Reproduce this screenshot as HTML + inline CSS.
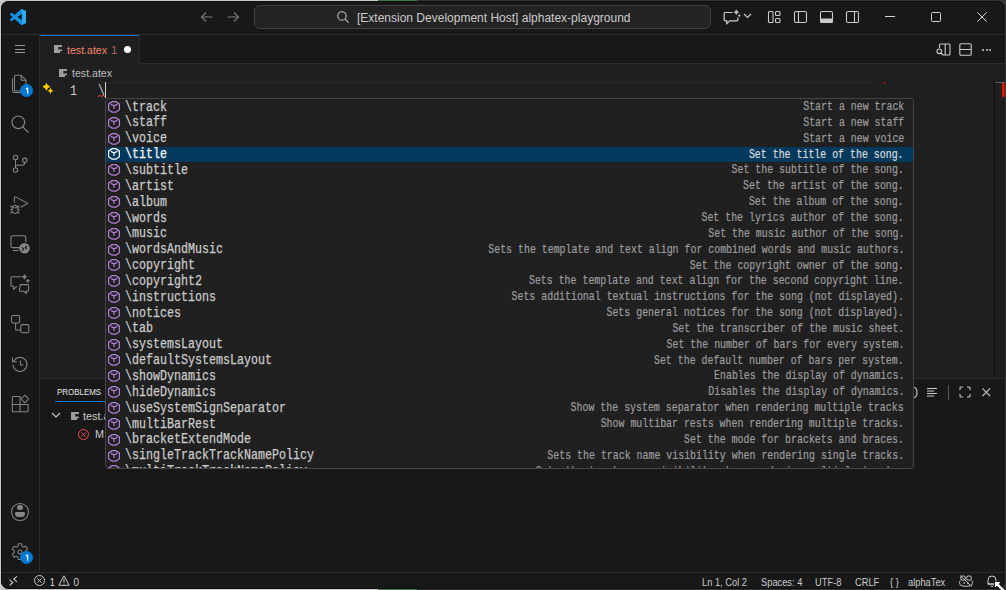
<!DOCTYPE html>
<html><head><meta charset="utf-8">
<style>
html,body{margin:0;padding:0;width:1006px;height:590px;overflow:hidden;background:#363636;font-family:"Liberation Sans",sans-serif;}
.a{position:absolute;}
#win{position:absolute;left:1px;top:1px;width:1004px;height:588px;background:#181818;border-radius:8px;overflow:hidden;}
#pg{position:absolute;left:-1px;top:-1px;width:1006px;height:590px;}
#winborder{position:absolute;left:1px;top:1px;width:1002px;height:586px;border:1px solid rgba(0,0,0,.4);border-right-color:rgba(0,0,0,.15);border-radius:8px;pointer-events:none;}
svg{position:absolute;overflow:visible;}
.row{position:absolute;left:0;width:807px;height:15.85px;}
.row .ic{position:absolute;left:2.2px;top:1.9px;width:12px;height:11.8px;}
.row .lb{position:absolute;left:19px;top:0.6px;font-size:14px;line-height:15.83px;color:#cccccc;font-family:"Liberation Mono",monospace;white-space:pre;transform:scaleX(.8333);transform-origin:0 0;-webkit-text-stroke-width:0.25px;}
.row .ds{position:absolute;right:9px;top:1px;font-size:11.9px;line-height:15.83px;color:#9d9d9d;font-family:"Liberation Mono",monospace;white-space:pre;transform:scaleX(.8333);transform-origin:100% 0;-webkit-text-stroke-width:0.2px;}
.row.sel{background:#04395e;}
.row.sel .lb{color:#ffffff;}
.row.sel .ds{color:#dcdcdc;}
</style></head><body>
<div class="a" style="left:0;top:0;width:378px;height:590px;background:#c9cacc"></div>
<div class="a" style="left:378px;top:0;width:39px;height:590px;background:#3d7a4e"></div>
<div id="win"><div id="pg">
<!-- TITLE BAR -->
<div class="a" style="left:0;top:0;width:1006px;height:34px;background:#181818"></div>
<div class="a" style="left:0;top:34px;width:1006px;height:1px;background:#2b2b2b"></div>
<!-- vscode logo -->
<svg style="left:10px;top:9px" width="16" height="16" viewBox="0 0 100 100"><defs><clipPath id="rb"><rect x="74" y="0" width="30" height="100"/></clipPath></defs>
 <path d="M96.5 10.8 75.9.9a6.2 6.2 0 0 0-7.1 1.2L29.4 38 12.2 25a4.2 4.2 0 0 0-5.3.2L1.4 30.2a4.2 4.2 0 0 0 0 6.2L16.3 50 1.4 63.6a4.2 4.2 0 0 0 0 6.2l5.5 5a4.2 4.2 0 0 0 5.3.2l17.2-13 39.4 35.9a6.2 6.2 0 0 0 7.1 1.2l20.6-9.9a6.2 6.2 0 0 0 3.5-5.6V16.4a6.2 6.2 0 0 0-3.5-5.6zM74 70.5 47 50 74 29.5z" fill="#1690e0"/><path d="M96.5 10.8 75.9.9a6.2 6.2 0 0 0-7.1 1.2L29.4 38 12.2 25a4.2 4.2 0 0 0-5.3.2L1.4 30.2a4.2 4.2 0 0 0 0 6.2L16.3 50 1.4 63.6a4.2 4.2 0 0 0 0 6.2l5.5 5a4.2 4.2 0 0 0 5.3.2l17.2-13 39.4 35.9a6.2 6.2 0 0 0 7.1 1.2l20.6-9.9a6.2 6.2 0 0 0 3.5-5.6V16.4a6.2 6.2 0 0 0-3.5-5.6zM74 70.5 47 50 74 29.5z" fill="#2aa9f4" clip-path="url(#rb)"/>
</svg>
<!-- back / forward arrows -->
<svg style="left:199px;top:9px" width="16" height="16" viewBox="0 0 16 16" fill="none" stroke="#7a7a7a" stroke-width="1.1"><path d="M2.5 8h11M7 3.5 2.5 8 7 12.5"/></svg>
<svg style="left:225px;top:9px" width="16" height="16" viewBox="0 0 16 16" fill="none" stroke="#7a7a7a" stroke-width="1.1"><path d="M2.5 8h11M9 3.5 13.5 8 9 12.5"/></svg>
<!-- command center -->
<div class="a" style="left:254px;top:5px;width:455px;height:22px;border:1px solid #404040;border-radius:6px;background:#232323"></div>
<svg style="left:336px;top:10px" width="14" height="14" viewBox="0 0 16 16" fill="none" stroke="#c4c4c4" stroke-width="1.2"><circle cx="6.8" cy="6.8" r="4.8"/><path d="M10.3 10.3 14.5 14.5"/></svg>
<div class="a" style="left:357px;top:9.7px;font-size:12px;line-height:16px;color:#cccccc;white-space:pre">[Extension Development Host] alphatex-playground</div>

<!-- chat icon + chevron -->
<svg style="left:723px;top:9px" width="18" height="16" viewBox="0 0 18 16" fill="none" stroke="#cccccc" stroke-width="1.2"><path d="M9.5 3.5H2.2a1 1 0 0 0-1 1v6.3a1 1 0 0 0 1 1h1.6v2.8l2.9-2.8h7.2a1 1 0 0 0 1-1V8.5"/><path d="M13.3 0.8l.7 1.7 1.7.7-1.7.7-.7 1.7-.7-1.7-1.7-.7 1.7-.7z" fill="#cccccc" stroke-width="0.6"/><path d="M16.3 5.3l.4.9.9.4-.9.4-.4.9-.4-.9-.9-.4.9-.4z" fill="#cccccc" stroke-width="0.4"/></svg>
<svg style="left:743px;top:13px" width="9" height="6" viewBox="0 0 9 6" fill="none" stroke="#cccccc" stroke-width="1.1"><path d="M1 1 4.5 4.5 8 1"/></svg>
<!-- layout icons -->
<svg style="left:767px;top:10px" width="15" height="14" viewBox="0 0 15 14" fill="none" stroke="#cccccc" stroke-width="1.1"><rect x="1.5" y="1.5" width="4.5" height="11" rx="1"/><rect x="8.5" y="1.5" width="4.5" height="4" rx="1"/><rect x="8.5" y="8.5" width="4.5" height="4" rx="1"/></svg>
<svg style="left:793px;top:10px" width="15" height="14" viewBox="0 0 15 14" fill="none" stroke="#cccccc" stroke-width="1.1"><rect x="1.5" y="1.5" width="12" height="11" rx="1.5"/><path d="M5.5 1.5v11"/></svg>
<svg style="left:819px;top:10px" width="15" height="14" viewBox="0 0 15 14" fill="none" stroke="#cccccc" stroke-width="1.1"><rect x="1.5" y="1.5" width="12" height="11" rx="1.5"/><path d="M1.5 9h12v2a1.5 1.5 0 0 1-1.5 1.5H3A1.5 1.5 0 0 1 1.5 11z" fill="#cccccc"/></svg>
<svg style="left:845px;top:10px" width="15" height="14" viewBox="0 0 15 14" fill="none" stroke="#cccccc" stroke-width="1.1"><rect x="1.5" y="1.5" width="12" height="11" rx="1.5"/><path d="M9.5 1.5v11"/></svg>
<!-- window controls -->
<div class="a" style="left:885px;top:16px;width:10px;height:1px;background:#d0d0d0"></div>
<div class="a" style="left:931px;top:12px;width:8px;height:8px;border:1px solid #d0d0d0;border-radius:1.5px"></div>
<svg style="left:977px;top:12px" width="10" height="10" viewBox="0 0 10 10" fill="none" stroke="#d8d8d8" stroke-width="1"><path d="M0.3 0.3 9.7 9.7M9.7 0.3 0.3 9.7"/></svg>

<!-- ACTIVITY BAR -->
<div class="a" style="left:0;top:35px;width:39px;height:537px;background:#181818"></div>
<div class="a" style="left:39px;top:35px;width:1px;height:537px;background:#2b2b2b"></div>
<!-- hamburger -->
<div class="a" style="left:15px;top:45px;width:10px;height:1px;background:#9a9a9a"></div>
<div class="a" style="left:15px;top:48.6px;width:10px;height:1px;background:#9a9a9a"></div>
<div class="a" style="left:15px;top:52.2px;width:10px;height:1px;background:#9a9a9a"></div>
<!-- files -->
<svg style="left:10px;top:74px" width="20" height="20" viewBox="0 0 20 20" fill="none" stroke="#868686" stroke-width="1.05"><path d="M5.5 1.3h5.6l4.9 4.9V16a1 1 0 0 1-1 1H5.5a1 1 0 0 1-1-1V2.3a1 1 0 0 1 1-1z"/><path d="M11.1 1.3v3.9a1 1 0 0 0 1 1H16"/><path d="M2.5 4.3v12.4a1.8 1.8 0 0 0 1.8 1.8H11"/></svg>
<div class="a" style="left:20px;top:83.5px;width:13px;height:13px;border-radius:50%;background:#0078d4"></div>
<svg style="left:20px;top:83.5px" width="13" height="13" viewBox="0 0 13 13"><path d="M5.6 4.6 7.3 3.4h.9v6.3H7V4.9L5.9 5.6z" fill="#fff"/></svg>
<!-- search -->
<svg style="left:10px;top:114px" width="20" height="20" viewBox="0 0 20 20" fill="none" stroke="#868686" stroke-width="1.1"><circle cx="8.3" cy="8.3" r="6.3"/><path d="M12.8 12.8 18.5 18.5"/></svg>
<!-- scm -->
<svg style="left:10px;top:154px" width="20" height="20" viewBox="0 0 20 20" fill="none" stroke="#868686" stroke-width="1.05"><circle cx="5.5" cy="3.5" r="2.2"/><circle cx="5.5" cy="16" r="2.2"/><circle cx="14.8" cy="6.3" r="2.2"/><path d="M5.5 5.7v8.1M14.8 8.5c0 2-1.3 2.8-3 2.8H5.5"/></svg>
<!-- run debug -->
<svg style="left:10px;top:194px" width="20" height="20" viewBox="0 0 20 20" fill="none" stroke="#868686" stroke-width="1.05" stroke-linejoin="round"><path d="M4.3 8.8V3.6a.8.8 0 0 1 1.2-.7l12.3 6.5-7 3.9"/><path d="M5 11.3c1.8 0 3 1.9 3 4.1s-1.2 4.1-3 4.1-3-1.9-3-4.1 1.2-4.1 3-4.1zM2.2 13.8h5.6M.4 12l1.8 1.2M.2 15.8h1.9M.4 19.4l1.8-1.2M9.6 12l-1.8 1.2M9.8 15.8H7.9M9.6 19.4l-1.8-1.2"/></svg>
<!-- remote explorer -->
<svg style="left:10px;top:234px" width="20" height="20" viewBox="0 0 20 20" fill="none" stroke="#868686" stroke-width="1.05"><path d="M10 13.6H2.3A1.3 1.3 0 0 1 1 12.3V3a1.3 1.3 0 0 1 1.3-1.3h12.2A1.3 1.3 0 0 1 15.8 3v5"/><path d="M3 16.5h5.5"/><circle cx="14.5" cy="14.3" r="5.3" fill="#868686" stroke="none"/><path d="M11.9 13.4l1.9 1.7-1.9 1.7M17.1 11.8l-1.9 1.7 1.9 1.7" stroke="#181818" stroke-width="1.1"/></svg>
<!-- chat -->
<svg style="left:10px;top:274px" width="20" height="20" viewBox="0 0 20 20" fill="none" stroke="#868686" stroke-width="1.05"><path d="M11.5 2.7H2.3A1.3 1.3 0 0 0 1 4v7.3a1 1 0 0 0 1 1h1.7v3l3.3-3"/><path d="M10.3 10.6h7.2a1 1 0 0 1 1 1v4.7a1 1 0 0 1-1 1h-1.3v2.2l-2.4-2.2h-3.5a1 1 0 0 1-1-1z"/><path d="M14.5 0.19999999999999973Q15.07 2.23 17.1 2.8Q15.07 3.37 14.5 5.4Q13.93 3.37 11.9 2.8Q13.93 2.23 14.5 0.19999999999999973zM17.8 4.9Q18.22 6.38 19.7 6.8Q18.22 7.22 17.8 8.7Q17.38 7.22 15.9 6.8Q17.38 6.38 17.8 4.9z" fill="#868686" stroke="#868686" stroke-width="0.4"/></svg>
<!-- squares (testing/other) -->
<svg style="left:10px;top:314px" width="20" height="20" viewBox="0 0 20 20" fill="none" stroke="#868686" stroke-width="1.05"><rect x="1.6" y="1.4" width="8" height="7.6" rx="1.5"/><rect x="10.8" y="10.6" width="8" height="8.2" rx="1.5"/><path d="M5.6 9v6.2a.8.8 0 0 0 .8.8h4.4"/></svg>
<!-- timeline -->
<svg style="left:10px;top:354px" width="20" height="20" viewBox="0 0 20 20" fill="none" stroke="#868686" stroke-width="1.05"><path d="M3.6 7.5A7 7 0 1 1 3 11"/><path d="M2.5 3.5v4.3h4.3"/><path d="M10.5 6.5V11h3"/></svg>
<!-- extensions -->
<svg style="left:10px;top:394px" width="20" height="20" viewBox="0 0 20 20" fill="none" stroke="#868686" stroke-width="1.05"><path d="M2.3 17V3.5a1 1 0 0 1 1-1H10v15.3M2.3 10.5h15.8v6.3a1 1 0 0 1-1 1H3.3a1 1 0 0 1-1-1"/><path d="M14.8 1.2l3.8 3.8-3.8 3.8-3.8-3.8z" stroke-linejoin="round"/></svg>
<!-- accounts -->
<svg style="left:10px;top:502px" width="20" height="20" viewBox="0 0 20 20" fill="none" stroke="#868686" stroke-width="1.05"><circle cx="10" cy="10" r="8.5"/></svg>
<div class="a" style="left:17.4px;top:504.8px;width:5.2px;height:5.2px;border-radius:50%;background:#868686"></div>
<div class="a" style="left:15.4px;top:512px;width:9.4px;height:5px;border-radius:1.5px 1.5px 5px 5px;background:#868686"></div>
<!-- manage gear -->
<svg style="left:10px;top:542px" width="20" height="20" viewBox="0 0 20 20" fill="none" stroke="#868686" stroke-width="1.05"><path d="M8.4 1.8h3.2l.5 2.4 1.6.9 2.3-.8 1.6 2.8-1.8 1.6v1.9l1.8 1.6-1.6 2.8-2.3-.8-1.6.9-.5 2.4H8.4l-.5-2.4-1.6-.9-2.3.8-1.6-2.8 1.8-1.6V8.7L2.4 7.1 4 4.3l2.3.8 1.6-.9z"/><circle cx="10" cy="10" r="2"/></svg>
<div class="a" style="left:20px;top:551px;width:13px;height:13px;border-radius:50%;background:#0078d4"></div>
<svg style="left:20px;top:551px" width="13" height="13" viewBox="0 0 13 13"><path d="M5.6 4.6 7.3 3.4h.9v6.3H7V4.9L5.9 5.6z" fill="#fff"/></svg>

<!-- TAB BAR -->
<div class="a" style="left:40px;top:35px;width:966px;height:29px;background:#181818"></div>
<div class="a" style="left:40px;top:63px;width:966px;height:1px;background:#2b2b2b"></div>
<div class="a" style="left:40px;top:35px;width:99px;height:29px;background:#1f1f1f"></div>
<div class="a" style="left:40px;top:35px;width:99px;height:1px;background:#0078d4"></div>
<div class="a" style="left:139px;top:35px;width:1px;height:28px;background:#2b2b2b"></div>
<svg style="left:54px;top:45px" width="8" height="8" viewBox="0 0 8 8"><path d="M0 0h8v2H4.3v2.4H8v1.8H6V8H0z" fill="#9e9e9e"/></svg>
<div class="a" style="left:67px;top:43px;font-size:10.6px;line-height:14px;color:#f48771;white-space:pre">test.atex</div><div class="a" style="left:111.2px;top:43px;font-size:10.6px;line-height:14px;color:#b8695c;white-space:pre">1</div>
<div class="a" style="left:123.5px;top:46px;width:7px;height:7px;border-radius:50%;background:#ffffff"></div>
<!-- tab actions -->
<svg style="left:936px;top:43px" width="15" height="13" viewBox="0 0 15 13" fill="none" stroke="#cccccc" stroke-width="1.1"><path d="M3.5 5V2a1 1 0 0 1 1-1h8.5a1 1 0 0 1 1 1v9a1 1 0 0 1-1 1H7"/><path d="M9.2 1v11"/><circle cx="3.3" cy="8.3" r="2.3"/><path d="M5 10l2 2"/></svg>
<svg style="left:959px;top:43px" width="13" height="13" viewBox="0 0 13 13" fill="none" stroke="#cccccc" stroke-width="1.1"><rect x="0.8" y="0.8" width="11.4" height="11.4" rx="1.3"/><path d="M0.8 6.5h11.4"/></svg>
<div class="a" style="left:982px;top:48.5px;width:2px;height:2px;background:#cccccc;border-radius:1px"></div>
<div class="a" style="left:985.7px;top:48.5px;width:2px;height:2px;background:#cccccc;border-radius:1px"></div>
<div class="a" style="left:989.4px;top:48.5px;width:2px;height:2px;background:#cccccc;border-radius:1px"></div>
<!-- BREADCRUMBS + EDITOR -->
<div class="a" style="left:40px;top:64px;width:966px;height:314px;background:#1f1f1f"></div>
<svg style="left:59px;top:69px" width="8" height="8" viewBox="0 0 8 8"><path d="M0 0h8v2H4.3v2.4H8v1.8H6V8H0z" fill="#9e9e9e"/></svg>
<div class="a" style="left:72px;top:66px;font-size:10.6px;line-height:14px;color:#bdbdbd;white-space:pre">test.atex</div>
<!-- current line border -->
<div class="a" style="left:98px;top:82px;width:778px;height:15px;border-top:1px solid #282828;border-bottom:1px solid #282828"></div>
<div class="a" style="left:884px;top:82px;width:1.2px;height:2.2px;background:#e51400"></div>
<!-- sparkle -->
<svg style="left:40px;top:80px" width="18" height="18" viewBox="0 0 18 18" fill="#ffcc00"><path d="M6.4 2.7Q7.20 5.90 10.4 6.7Q7.20 7.50 6.4 10.7Q5.60 7.50 2.4000000000000004 6.7Q5.60 5.90 6.4 2.7zM10.5 7.700000000000001Q11.12 10.18 13.6 10.8Q11.12 11.42 10.5 13.9Q9.88 11.42 7.4 10.8Q9.88 10.18 10.5 7.700000000000001z"/></svg>
<div class="a" style="left:69.5px;top:84px;font-size:14px;line-height:15.83px;color:#cccccc;font-family:'Liberation Mono',monospace;transform:scaleX(.8333);transform-origin:0 0">1</div>
<div class="a" style="left:98px;top:84px;font-size:14px;line-height:15.83px;color:#cccccc;font-family:'Liberation Mono',monospace;transform:scaleX(.8333);transform-origin:0 0">\</div>
<svg style="left:98px;top:94px" width="7" height="4" viewBox="0 0 7 4" fill="none" stroke="#f14c4c" stroke-width="1"><path d="M0 3 1.75 1 3.5 3 5.25 1 7 3"/></svg>
<div class="a" style="left:105px;top:82px;width:1px;height:16px;background:#d0d0d0"></div>
<!-- overview ruler -->
<div class="a" style="left:994px;top:82px;width:1px;height:296px;background:#0d0f12"></div>
<div class="a" style="left:995px;top:82px;width:11px;height:1px;background:#5a5a5a"></div>
<div class="a" style="left:1002px;top:83px;width:4px;height:14px;background:#e51400"></div>
<!-- PANEL -->
<div class="a" style="left:40px;top:378px;width:966px;height:194px;background:#181818"></div>
<div class="a" style="left:40px;top:378px;width:966px;height:1px;background:#2b2b2b"></div>
<div class="a" style="left:56.5px;top:385.8px;font-size:9.8px;line-height:12px;color:#e7e7e7;white-space:pre;transform:scaleX(0.81);transform-origin:0 0">PROBLEMS</div>
<div class="a" style="left:55px;top:400.5px;width:60px;height:1px;background:#0078d4"></div>
<svg style="left:51px;top:412px" width="10" height="6" viewBox="0 0 10 6" fill="none" stroke="#cccccc" stroke-width="1.1"><path d="M1 1 5 5 9 1"/></svg>
<svg style="left:71px;top:412px" width="8" height="8" viewBox="0 0 8 8"><path d="M0 0h8v2H4.3v2.4H8v1.8H6V8H0z" fill="#9e9e9e"/></svg>
<div class="a" style="left:83px;top:409px;font-size:10.83px;line-height:14px;color:#cccccc;white-space:pre">test.atex</div>
<svg style="left:78px;top:428.5px" width="11" height="11" viewBox="0 0 11 11" fill="none" stroke="#f14c4c" stroke-width="1"><circle cx="5.5" cy="5.5" r="5"/><path d="M3.5 3.5l4 4M7.5 3.5l-4 4"/></svg>
<div class="a" style="left:95px;top:427px;font-size:10.83px;line-height:14px;color:#cccccc;white-space:pre">M</div>
<!-- panel actions -->
<svg style="left:908px;top:386px" width="12" height="13" viewBox="0 0 12 13" fill="none" stroke="#cccccc" stroke-width="1.1"><path d="M3 1.5h3.5a2.5 5 0 0 1 0 10H3"/></svg>
<svg style="left:926px;top:386px" width="12" height="12" viewBox="0 0 12 12" fill="none" stroke="#cccccc" stroke-width="1.1"><path d="M1 2.5h10M1 5h7M1 7.5h10M1 10h7"/></svg>
<div class="a" style="left:948px;top:385px;width:1px;height:15px;background:#5a5a5a"></div>
<svg style="left:959px;top:386px" width="12" height="12" viewBox="0 0 12 12" fill="none" stroke="#cccccc" stroke-width="1.1"><path d="M1 4V2a1 1 0 0 1 1-1h2M8 1h2a1 1 0 0 1 1 1v2M11 8v2a1 1 0 0 1-1 1H8M4 11H2a1 1 0 0 1-1-1V8"/></svg>
<svg style="left:982.3px;top:388.3px" width="8.5" height="8.5" viewBox="0 0 8.5 8.5" fill="none" stroke="#cccccc" stroke-width="1.1"><path d="M.4 .4 8.1 8.1M8.1 .4 .4 8.1"/></svg>
<!-- STATUS BAR -->
<div class="a" style="left:0;top:572px;width:1006px;height:18px;background:#181818"></div>
<div class="a" style="left:0;top:572px;width:1006px;height:1px;background:#2b2b2b"></div>
<svg style="left:9px;top:576px" width="9" height="10" viewBox="0 0 9 10" fill="none" stroke="#cccccc" stroke-width="1.1"><path d="M.6 3.8 3.8 6.5.6 9.4M8 .4 4.8 3.1 8 5.9"/></svg>
<svg style="left:34px;top:575px" width="11" height="11" viewBox="0 0 11 11" fill="none" stroke="#cccccc" stroke-width="1"><circle cx="5.5" cy="5.5" r="5"/><path d="M3.5 3.5l4 4M7.5 3.5l-4 4"/></svg>
<div class="a" style="left:49.5px;top:576px;font-size:10px;line-height:14px;color:#cccccc;white-space:pre">1</div>
<svg style="left:58px;top:575px" width="12" height="11" viewBox="0 0 12 11" fill="none" stroke="#cccccc" stroke-width="1"><path d="M6 .8 11.2 10.3H.8z"/><path d="M6 4v3.5M6 8.5v1"/></svg>
<div class="a" style="left:73.5px;top:576px;font-size:10px;line-height:14px;color:#cccccc;white-space:pre">0</div>
<div class="a" style="left:702px;top:576px;font-size:10px;line-height:14px;color:#cccccc;white-space:pre;transform:scaleX(.93);transform-origin:0 0">Ln 1, Col 2</div>
<div class="a" style="left:760.5px;top:576px;font-size:10px;line-height:14px;color:#cccccc;white-space:pre;transform:scaleX(.93);transform-origin:0 0">Spaces: 4</div>
<div class="a" style="left:815px;top:576px;font-size:10px;line-height:14px;color:#cccccc;white-space:pre;transform:scaleX(.93);transform-origin:0 0">UTF-8</div>
<div class="a" style="left:854.5px;top:576px;font-size:10px;line-height:14px;color:#cccccc;white-space:pre;transform:scaleX(.93);transform-origin:0 0">CRLF</div>
<div class="a" style="left:890px;top:576px;font-size:10px;line-height:14px;color:#cccccc;white-space:pre;transform:scaleX(.93);transform-origin:0 0">{ }</div>
<div class="a" style="left:908px;top:576px;font-size:10px;line-height:14px;color:#cccccc;white-space:pre;transform:scaleX(.93);transform-origin:0 0">alphaTex</div>
<svg style="left:959px;top:574.5px" width="14" height="12" viewBox="0 0 14 12" fill="none" stroke="#cccccc" stroke-width="1"><rect x="1.6" y="1" width="4.8" height="4.2" rx="1.8"/><rect x="7.6" y="1" width="4.8" height="4.2" rx="1.8"/><path d="M1.2 5.5C.4 6.5.4 8.3.9 9.5 2 10.8 4.5 11.3 7 11.3s5-.5 6.1-1.8c.5-1.2.5-3-.3-4M5.2 7v2M8.8 7v2M1.2.6l11.6 11"/></svg>
<svg style="left:987px;top:575px" width="10" height="12" viewBox="0 0 10 12" fill="none" stroke="#cccccc" stroke-width="1"><path d="M1 9V5a4 4 0 0 1 8 0v4zM.5 9h9M4 10.5a1 1 0 0 0 2 0"/></svg>

<!-- SUGGEST WIDGET -->
<div class="a" style="left:105px;top:98px;width:807px;height:369px;border:1px solid #454545;border-radius:3px;background:#202020;overflow:hidden">
<div class="row" style="top:0.00px"><svg class="ic" viewBox="0 0 12 11" preserveAspectRatio="none" fill="none" stroke="#b180d7" stroke-width="1.15" stroke-linejoin="round"><path d="M.6 2.9 4.2.6h3.6l3.6 2.3v5.2L7.8 10.4H4.2L.6 8.1z"/><path d="M2.8 3.2 6 4.5l3.4-1.3M6 4.5v3"/></svg><div class="lb">\track</div><div class="ds">Start a new track</div></div>
<div class="row" style="top:15.85px"><svg class="ic" viewBox="0 0 12 11" preserveAspectRatio="none" fill="none" stroke="#b180d7" stroke-width="1.15" stroke-linejoin="round"><path d="M.6 2.9 4.2.6h3.6l3.6 2.3v5.2L7.8 10.4H4.2L.6 8.1z"/><path d="M2.8 3.2 6 4.5l3.4-1.3M6 4.5v3"/></svg><div class="lb">\staff</div><div class="ds">Start a new staff</div></div>
<div class="row" style="top:31.70px"><svg class="ic" viewBox="0 0 12 11" preserveAspectRatio="none" fill="none" stroke="#b180d7" stroke-width="1.15" stroke-linejoin="round"><path d="M.6 2.9 4.2.6h3.6l3.6 2.3v5.2L7.8 10.4H4.2L.6 8.1z"/><path d="M2.8 3.2 6 4.5l3.4-1.3M6 4.5v3"/></svg><div class="lb">\voice</div><div class="ds">Start a new voice</div></div>
<div class="row sel" style="top:47.55px"><svg class="ic" viewBox="0 0 12 11" preserveAspectRatio="none" fill="none" stroke="#ffffff" stroke-width="1.15" stroke-linejoin="round"><path d="M.6 2.9 4.2.6h3.6l3.6 2.3v5.2L7.8 10.4H4.2L.6 8.1z"/><path d="M2.8 3.2 6 4.5l3.4-1.3M6 4.5v3"/></svg><div class="lb">\title</div><div class="ds">Set the title of the song.</div></div>
<div class="row" style="top:63.40px"><svg class="ic" viewBox="0 0 12 11" preserveAspectRatio="none" fill="none" stroke="#b180d7" stroke-width="1.15" stroke-linejoin="round"><path d="M.6 2.9 4.2.6h3.6l3.6 2.3v5.2L7.8 10.4H4.2L.6 8.1z"/><path d="M2.8 3.2 6 4.5l3.4-1.3M6 4.5v3"/></svg><div class="lb">\subtitle</div><div class="ds">Set the subtitle of the song.</div></div>
<div class="row" style="top:79.25px"><svg class="ic" viewBox="0 0 12 11" preserveAspectRatio="none" fill="none" stroke="#b180d7" stroke-width="1.15" stroke-linejoin="round"><path d="M.6 2.9 4.2.6h3.6l3.6 2.3v5.2L7.8 10.4H4.2L.6 8.1z"/><path d="M2.8 3.2 6 4.5l3.4-1.3M6 4.5v3"/></svg><div class="lb">\artist</div><div class="ds">Set the artist of the song.</div></div>
<div class="row" style="top:95.10px"><svg class="ic" viewBox="0 0 12 11" preserveAspectRatio="none" fill="none" stroke="#b180d7" stroke-width="1.15" stroke-linejoin="round"><path d="M.6 2.9 4.2.6h3.6l3.6 2.3v5.2L7.8 10.4H4.2L.6 8.1z"/><path d="M2.8 3.2 6 4.5l3.4-1.3M6 4.5v3"/></svg><div class="lb">\album</div><div class="ds">Set the album of the song.</div></div>
<div class="row" style="top:110.95px"><svg class="ic" viewBox="0 0 12 11" preserveAspectRatio="none" fill="none" stroke="#b180d7" stroke-width="1.15" stroke-linejoin="round"><path d="M.6 2.9 4.2.6h3.6l3.6 2.3v5.2L7.8 10.4H4.2L.6 8.1z"/><path d="M2.8 3.2 6 4.5l3.4-1.3M6 4.5v3"/></svg><div class="lb">\words</div><div class="ds">Set the lyrics author of the song.</div></div>
<div class="row" style="top:126.80px"><svg class="ic" viewBox="0 0 12 11" preserveAspectRatio="none" fill="none" stroke="#b180d7" stroke-width="1.15" stroke-linejoin="round"><path d="M.6 2.9 4.2.6h3.6l3.6 2.3v5.2L7.8 10.4H4.2L.6 8.1z"/><path d="M2.8 3.2 6 4.5l3.4-1.3M6 4.5v3"/></svg><div class="lb">\music</div><div class="ds">Set the music author of the song.</div></div>
<div class="row" style="top:142.65px"><svg class="ic" viewBox="0 0 12 11" preserveAspectRatio="none" fill="none" stroke="#b180d7" stroke-width="1.15" stroke-linejoin="round"><path d="M.6 2.9 4.2.6h3.6l3.6 2.3v5.2L7.8 10.4H4.2L.6 8.1z"/><path d="M2.8 3.2 6 4.5l3.4-1.3M6 4.5v3"/></svg><div class="lb">\wordsAndMusic</div><div class="ds">Sets the template and text align for combined words and music authors.</div></div>
<div class="row" style="top:158.50px"><svg class="ic" viewBox="0 0 12 11" preserveAspectRatio="none" fill="none" stroke="#b180d7" stroke-width="1.15" stroke-linejoin="round"><path d="M.6 2.9 4.2.6h3.6l3.6 2.3v5.2L7.8 10.4H4.2L.6 8.1z"/><path d="M2.8 3.2 6 4.5l3.4-1.3M6 4.5v3"/></svg><div class="lb">\copyright</div><div class="ds">Set the copyright owner of the song.</div></div>
<div class="row" style="top:174.35px"><svg class="ic" viewBox="0 0 12 11" preserveAspectRatio="none" fill="none" stroke="#b180d7" stroke-width="1.15" stroke-linejoin="round"><path d="M.6 2.9 4.2.6h3.6l3.6 2.3v5.2L7.8 10.4H4.2L.6 8.1z"/><path d="M2.8 3.2 6 4.5l3.4-1.3M6 4.5v3"/></svg><div class="lb">\copyright2</div><div class="ds">Sets the template and text align for the second copyright line.</div></div>
<div class="row" style="top:190.20px"><svg class="ic" viewBox="0 0 12 11" preserveAspectRatio="none" fill="none" stroke="#b180d7" stroke-width="1.15" stroke-linejoin="round"><path d="M.6 2.9 4.2.6h3.6l3.6 2.3v5.2L7.8 10.4H4.2L.6 8.1z"/><path d="M2.8 3.2 6 4.5l3.4-1.3M6 4.5v3"/></svg><div class="lb">\instructions</div><div class="ds">Sets additional textual instructions for the song (not displayed).</div></div>
<div class="row" style="top:206.05px"><svg class="ic" viewBox="0 0 12 11" preserveAspectRatio="none" fill="none" stroke="#b180d7" stroke-width="1.15" stroke-linejoin="round"><path d="M.6 2.9 4.2.6h3.6l3.6 2.3v5.2L7.8 10.4H4.2L.6 8.1z"/><path d="M2.8 3.2 6 4.5l3.4-1.3M6 4.5v3"/></svg><div class="lb">\notices</div><div class="ds">Sets general notices for the song (not displayed).</div></div>
<div class="row" style="top:221.90px"><svg class="ic" viewBox="0 0 12 11" preserveAspectRatio="none" fill="none" stroke="#b180d7" stroke-width="1.15" stroke-linejoin="round"><path d="M.6 2.9 4.2.6h3.6l3.6 2.3v5.2L7.8 10.4H4.2L.6 8.1z"/><path d="M2.8 3.2 6 4.5l3.4-1.3M6 4.5v3"/></svg><div class="lb">\tab</div><div class="ds">Set the transcriber of the music sheet.</div></div>
<div class="row" style="top:237.75px"><svg class="ic" viewBox="0 0 12 11" preserveAspectRatio="none" fill="none" stroke="#b180d7" stroke-width="1.15" stroke-linejoin="round"><path d="M.6 2.9 4.2.6h3.6l3.6 2.3v5.2L7.8 10.4H4.2L.6 8.1z"/><path d="M2.8 3.2 6 4.5l3.4-1.3M6 4.5v3"/></svg><div class="lb">\systemsLayout</div><div class="ds">Set the number of bars for every system.</div></div>
<div class="row" style="top:253.60px"><svg class="ic" viewBox="0 0 12 11" preserveAspectRatio="none" fill="none" stroke="#b180d7" stroke-width="1.15" stroke-linejoin="round"><path d="M.6 2.9 4.2.6h3.6l3.6 2.3v5.2L7.8 10.4H4.2L.6 8.1z"/><path d="M2.8 3.2 6 4.5l3.4-1.3M6 4.5v3"/></svg><div class="lb">\defaultSystemsLayout</div><div class="ds">Set the default number of bars per system.</div></div>
<div class="row" style="top:269.45px"><svg class="ic" viewBox="0 0 12 11" preserveAspectRatio="none" fill="none" stroke="#b180d7" stroke-width="1.15" stroke-linejoin="round"><path d="M.6 2.9 4.2.6h3.6l3.6 2.3v5.2L7.8 10.4H4.2L.6 8.1z"/><path d="M2.8 3.2 6 4.5l3.4-1.3M6 4.5v3"/></svg><div class="lb">\showDynamics</div><div class="ds">Enables the display of dynamics.</div></div>
<div class="row" style="top:285.30px"><svg class="ic" viewBox="0 0 12 11" preserveAspectRatio="none" fill="none" stroke="#b180d7" stroke-width="1.15" stroke-linejoin="round"><path d="M.6 2.9 4.2.6h3.6l3.6 2.3v5.2L7.8 10.4H4.2L.6 8.1z"/><path d="M2.8 3.2 6 4.5l3.4-1.3M6 4.5v3"/></svg><div class="lb">\hideDynamics</div><div class="ds">Disables the display of dynamics.</div></div>
<div class="row" style="top:301.15px"><svg class="ic" viewBox="0 0 12 11" preserveAspectRatio="none" fill="none" stroke="#b180d7" stroke-width="1.15" stroke-linejoin="round"><path d="M.6 2.9 4.2.6h3.6l3.6 2.3v5.2L7.8 10.4H4.2L.6 8.1z"/><path d="M2.8 3.2 6 4.5l3.4-1.3M6 4.5v3"/></svg><div class="lb">\useSystemSignSeparator</div><div class="ds">Show the system separator when rendering multiple tracks</div></div>
<div class="row" style="top:317.00px"><svg class="ic" viewBox="0 0 12 11" preserveAspectRatio="none" fill="none" stroke="#b180d7" stroke-width="1.15" stroke-linejoin="round"><path d="M.6 2.9 4.2.6h3.6l3.6 2.3v5.2L7.8 10.4H4.2L.6 8.1z"/><path d="M2.8 3.2 6 4.5l3.4-1.3M6 4.5v3"/></svg><div class="lb">\multiBarRest</div><div class="ds">Show multibar rests when rendering multiple tracks.</div></div>
<div class="row" style="top:332.85px"><svg class="ic" viewBox="0 0 12 11" preserveAspectRatio="none" fill="none" stroke="#b180d7" stroke-width="1.15" stroke-linejoin="round"><path d="M.6 2.9 4.2.6h3.6l3.6 2.3v5.2L7.8 10.4H4.2L.6 8.1z"/><path d="M2.8 3.2 6 4.5l3.4-1.3M6 4.5v3"/></svg><div class="lb">\bracketExtendMode</div><div class="ds">Set the mode for brackets and braces.</div></div>
<div class="row" style="top:348.70px"><svg class="ic" viewBox="0 0 12 11" preserveAspectRatio="none" fill="none" stroke="#b180d7" stroke-width="1.15" stroke-linejoin="round"><path d="M.6 2.9 4.2.6h3.6l3.6 2.3v5.2L7.8 10.4H4.2L.6 8.1z"/><path d="M2.8 3.2 6 4.5l3.4-1.3M6 4.5v3"/></svg><div class="lb">\singleTrackTrackNamePolicy</div><div class="ds">Sets the track name visibility when rendering single tracks.</div></div>
<div class="row" style="top:364.55px"><svg class="ic" viewBox="0 0 12 11" preserveAspectRatio="none" fill="none" stroke="#b180d7" stroke-width="1.15" stroke-linejoin="round"><path d="M.6 2.9 4.2.6h3.6l3.6 2.3v5.2L7.8 10.4H4.2L.6 8.1z"/><path d="M2.8 3.2 6 4.5l3.4-1.3M6 4.5v3"/></svg><div class="lb">\multiTrackTrackNamePolicy</div><div class="ds">Sets the track name visibility when rendering multiple tracks.</div></div>
</div>
</div></div>
<div id="winborder"></div>
<svg style="left:992px;top:579px" width="16" height="14" viewBox="0 0 16 14"><path d="M3 3h5.6L6.7 4.9l6.6 6.6-1.8 1.8L4.9 6.7 3 8.6z" fill="#fff" stroke="#000" stroke-width="1.2" paint-order="stroke"/></svg>
</body></html>
